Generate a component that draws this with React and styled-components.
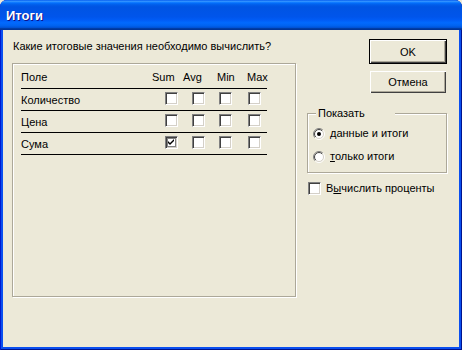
import React, { useId } from "react";
import styled, { createGlobalStyle } from "styled-components";

const GlobalStyle = createGlobalStyle`
  html, body {
    margin: 0;
    padding: 0;
    background: #ece9d8;
  }
  body {
    font-family: "Liberation Sans", Arial, sans-serif;
    font-size: 11px;
    color: #000;
  }
`;

const Window = styled.div`
  width: 462px;
  height: 350px;
  display: flex;
  flex-direction: column;
  box-sizing: border-box;
  background: #0a4ff0;
  border-radius: 7px 7px 0 0;
  overflow: hidden;
  box-shadow: inset 1px 0 0 #0019cf, inset -1px 0 0 #00138c,
    inset 0 -1px 0 #00138c;
`;

const TitleBar = styled.div`
  height: 30px;
  flex: none;
  display: flex;
  align-items: center;
  padding: 1px 0 0 6px;
  box-sizing: border-box;
  background: linear-gradient(
    to bottom,
    #0058ee 0%,
    #3593ff 4%,
    #288eff 6%,
    #127dff 8%,
    #036ffc 10%,
    #0262ee 14%,
    #0057e5 20%,
    #0054e3 24%,
    #0055eb 56%,
    #005bf5 66%,
    #026afe 76%,
    #0062ef 86%,
    #0052d6 92%,
    #0040ab 94%,
    #003092 100%
  );
`;

const Title = styled.span`
  font-family: "Liberation Sans", Arial, sans-serif;
  font-weight: bold;
  font-size: 13px;
  color: #fff;
  text-shadow: 1px 1px 0 #0f1089;
`;

const Body = styled.div`
  flex: 1;
  margin: 0 3px 3px;
  background: #ece9d8;
  display: flex;
  gap: 10px;
  padding: 9px 12px 0 9px;
`;

const LeftColumn = styled.div`
  width: 285px;
  display: flex;
  flex-direction: column;
`;

const Question = styled.div`
  line-height: 13px;
  padding: 1px 0 0 1px;
`;

const EtchedBox = styled.div`
  box-sizing: border-box;
  border: 1px solid #aca899;
  box-shadow: inset 1px 1px 0 #fff, 1px 1px 0 #fff;
`;

const Panel = styled(EtchedBox)`
  margin-top: 10px;
  width: 284px;
  height: 234px;
  padding: 0 28px 0 8px;
`;

const HeaderRow = styled.div`
  display: grid;
  grid-template-columns: 131px 31px 34px 30px auto;
  box-sizing: border-box;
  height: 25px;
  padding-top: 7px;
  line-height: 13px;
  border-bottom: 1px solid #000;
`;

const Row = styled.div`
  display: grid;
  grid-template-columns: 144px 27px 27px 29px auto;
  align-items: start;
  box-sizing: border-box;
  height: 22px;
  border-bottom: 1px solid #000;
`;

const FieldName = styled.span`
  padding-top: 5px;
  line-height: 13px;
`;

const CellBox = styled.span`
  padding-top: 3px;
  display: flex;
`;

const BoxFrame = styled.span`
  width: 13px;
  height: 13px;
  box-sizing: border-box;
  flex: none;
  display: flex;
  align-items: center;
  justify-content: center;
  background: #fff;
  border: 1px solid;
  border-color: #808080 #fff #fff #808080;
  box-shadow: inset 1px 1px 0 #404040, inset -1px -1px 0 #d4d0c8;
`;

const RightColumn = styled.div`
  width: 140px;
  display: flex;
  flex-direction: column;
  align-items: flex-end;
`;

const Button = styled.div`
  width: 78px;
  height: ${(p) => (p.$default ? 25 : 24)}px;
  box-sizing: border-box;
  display: flex;
  align-items: center;
  justify-content: center;
  margin-top: ${(p) => p.$top || 0}px;
  border: 1px solid ${(p) => (p.$default ? "#000" : "transparent")};
  box-shadow: inset 1px 1px 0 #fff, inset -1px -1px 0 #404040,
    inset -2px -2px 0 #aca899;
`;

const Group = styled(EtchedBox)`
  position: relative;
  margin-top: 19px;
  width: 140px;
  height: 60px;
  padding: 13px 0 0 5px;
  display: flex;
  flex-direction: column;
  gap: 10px;
  align-self: stretch;
`;

const Legend = styled.span`
  position: absolute;
  top: -7px;
  left: 8px;
  width: 79px;
  padding-left: 2px;
  box-sizing: border-box;
  line-height: 13px;
  background: #ece9d8;
`;

const Option = styled.label`
  display: flex;
  align-items: center;
  gap: 5px;
  line-height: 13px;
`;

const PercentOption = styled(Option)`
  align-self: stretch;
  margin-top: 9px;
  padding-left: 1px;
`;

function CheckBox({ checked }) {
  return (
    <BoxFrame>
      {checked && (
        <svg width="9" height="9" viewBox="0 0 9 9">
          <rect
            x="0.5"
            y="0.5"
            width="8"
            height="8"
            fill="none"
            stroke="#000"
            strokeDasharray="1 1"
          />
          <path d="M1 3 L3 5 L7 1 L7 3 L3 7 L1 5 Z" fill="#000" />
        </svg>
      )}
    </BoxFrame>
  );
}

function Radio({ checked }) {
  const id = useId().replace(/:/g, "");
  return (
    <svg width="12" height="12" viewBox="0 0 12 12" style={{ flex: "none" }}>
      <defs>
        <linearGradient id={id + "o"} x1="0" y1="0" x2="1" y2="1">
          <stop offset="50%" stopColor="#808080" />
          <stop offset="50%" stopColor="#fff" />
        </linearGradient>
        <linearGradient id={id + "i"} x1="0" y1="0" x2="1" y2="1">
          <stop offset="50%" stopColor="#404040" />
          <stop offset="50%" stopColor="#d4d0c8" />
        </linearGradient>
      </defs>
      <circle cx="6" cy="6" r="5.5" fill="none" stroke={`url(#${id}o)`} />
      <circle cx="6" cy="6" r="4.5" fill="#fff" stroke={`url(#${id}i)`} />
      {checked && <circle cx="6" cy="6" r="2" fill="#000" />}
    </svg>
  );
}

const rows = [
  { name: "Количество", checks: [false, false, false, false] },
  { name: "Цена", checks: [false, false, false, false] },
  { name: "Сума", checks: [true, false, false, false] },
];

export default function App() {
  return (
    <>
      <GlobalStyle />
      <Window>
        <TitleBar>
          <Title>Итоги</Title>
        </TitleBar>
        <Body>
          <LeftColumn>
            <Question>Какие итоговые значения необходимо вычислить?</Question>
            <Panel>
              <HeaderRow>
                <span>Поле</span>
                <span>Sum</span>
                <span>Avg</span>
                <span>Min</span>
                <span>Max</span>
              </HeaderRow>
              {rows.map((r) => (
                <Row key={r.name}>
                  <FieldName>{r.name}</FieldName>
                  {r.checks.map((c, i) => (
                    <CellBox key={i}>
                      <CheckBox checked={c} />
                    </CellBox>
                  ))}
                </Row>
              ))}
            </Panel>
          </LeftColumn>
          <RightColumn>
            <Button $default>OK</Button>
            <Button $top={6}>Отмена</Button>
            <Group>
              <Legend>Показать</Legend>
              <Option>
                <Radio checked />
                <span>
                  <u>д</u>анные и итоги
                </span>
              </Option>
              <Option>
                <Radio />
                <span>
                  <u>т</u>олько итоги
                </span>
              </Option>
            </Group>
            <PercentOption>
              <CheckBox />
              <span>
                В<u>ы</u>числить проценты
              </span>
            </PercentOption>
          </RightColumn>
        </Body>
      </Window>
    </>
  );
}
